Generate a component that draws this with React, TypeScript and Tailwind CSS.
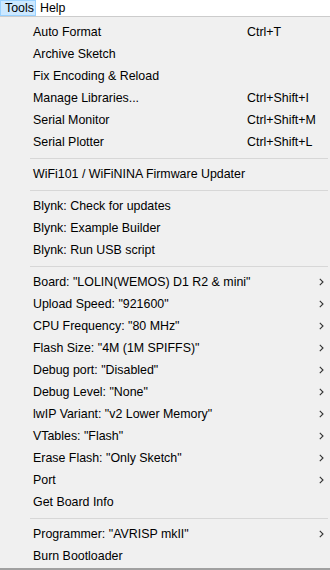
import React from "react";

type Item =
  | { sep: true }
  | { label: string; shortcut?: string; sub?: boolean; sep?: false };

const items: Item[] = [
  { label: "Auto Format", shortcut: "Ctrl+T" },
  { label: "Archive Sketch" },
  { label: "Fix Encoding & Reload" },
  { label: "Manage Libraries...", shortcut: "Ctrl+Shift+I" },
  { label: "Serial Monitor", shortcut: "Ctrl+Shift+M" },
  { label: "Serial Plotter", shortcut: "Ctrl+Shift+L" },
  { sep: true },
  { label: "WiFi101 / WiFiNINA Firmware Updater" },
  { sep: true },
  { label: "Blynk: Check for updates" },
  { label: "Blynk: Example Builder" },
  { label: "Blynk: Run USB script" },
  { sep: true },
  { label: 'Board: "LOLIN(WEMOS) D1 R2 & mini"', sub: true },
  { label: 'Upload Speed: "921600"', sub: true },
  { label: 'CPU Frequency: "80 MHz"', sub: true },
  { label: 'Flash Size: "4M (1M SPIFFS)"', sub: true },
  { label: 'Debug port: "Disabled"', sub: true },
  { label: 'Debug Level: "None"', sub: true },
  { label: 'lwIP Variant: "v2 Lower Memory"', sub: true },
  { label: 'VTables: "Flash"', sub: true },
  { label: 'Erase Flash: "Only Sketch"', sub: true },
  { label: "Port", sub: true },
  { label: "Get Board Info" },
  { sep: true },
  { label: 'Programmer: "AVRISP mkII"', sub: true },
  { label: "Burn Bootloader" },
];

function Chevron() {
  return (
    <svg width="5" height="8" viewBox="0 0 5 8" className="text-[#333]">
      <path d="M0.8 0.8 L4 4 L0.8 7.2" fill="none" stroke="currentColor" strokeWidth="1.1" />
    </svg>
  );
}

export default function App() {
  return (
    <div className="w-[330px] h-[570px] bg-white overflow-hidden text-[12.4px] text-black font-['Liberation_Sans',sans-serif]">
      {/* menu bar */}
      <div className="flex h-[16px] items-center bg-white">
        <div className="h-[16px] w-[36px] pl-[4px] flex items-center bg-[#cce8ff] border border-[#99d1ff] leading-none">Tools</div>
        <div className="pl-[4px] leading-none">Help</div>
      </div>

      {/* dropdown */}
      <div className="bg-[#f0f0f0] border-t border-[#cccccc] border-b-2 border-b-[#a0a0a0] pt-[4px] pb-[1px]">
        {items.map((it, i) =>
          it.sep ? (
            <div key={i} className="h-[10px] flex items-center pl-[30px] pr-[2px]">
              <div className="w-full h-px bg-[#d7d7d7]" />
            </div>
          ) : (
            <div key={i} className="h-[22px] flex items-center pl-[33px] pr-[6px] leading-none">
              <span className="flex-1 whitespace-nowrap">{it.label}</span>
              {it.shortcut && <span className="w-[77px] whitespace-nowrap">{it.shortcut}</span>}
              {it.sub && <Chevron />}
            </div>
          )
        )}
      </div>
    </div>
  );
}
